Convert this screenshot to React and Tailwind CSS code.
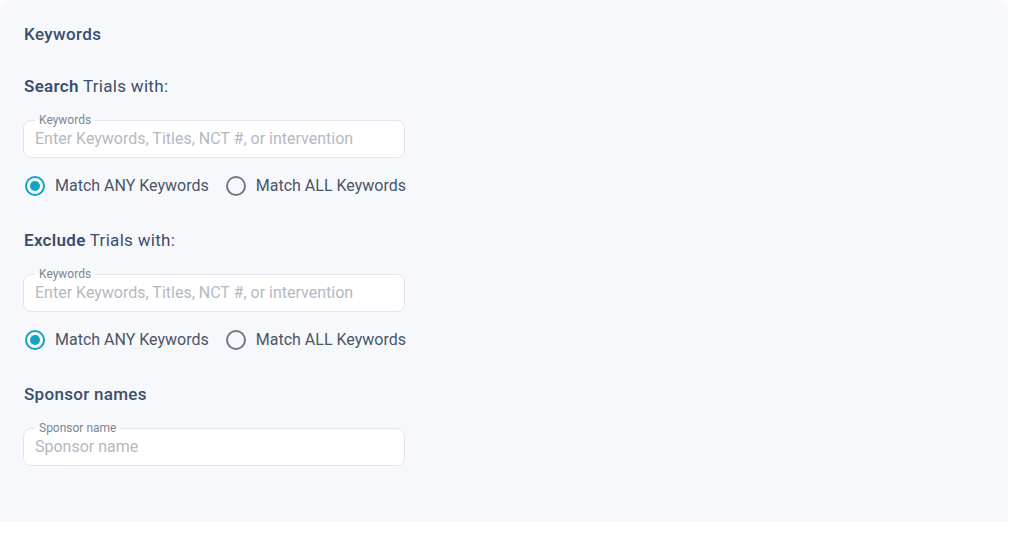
import React, { useState } from 'react';

const OutlinedField = ({ label, placeholder }) => (
  <fieldset className="w-[382px] rounded-lg border border-[#e1e4ea] bg-white px-[11px] pb-[8px] pt-[3px]">
    <legend className="px-[4px] text-[12px] leading-[12px] text-[#7b8594]">{label}</legend>
    <input
      type="text"
      placeholder={placeholder}
      className="block h-[20px] w-full bg-transparent text-[16px] leading-[20px] text-[#3e4d64] outline-none placeholder:text-[#b3b9c3]"
    />
  </fieldset>
);

const Radio = ({ checked, label, onClick }) => (
  <button type="button" onClick={onClick} className="flex items-center gap-[10px]">
    <span
      className={
        checked
          ? 'flex h-[20px] w-[20px] items-center justify-center rounded-full border-2 border-[#14a2c2]'
          : 'flex h-[20px] w-[20px] items-center justify-center rounded-full border-2 border-[#6f7a89]'
      }
    >
      {checked && <span className="h-[10px] w-[10px] rounded-full bg-[#14a2c2]" />}
    </span>
    <span className="text-[16px] leading-[20px] text-[#4a5567]">{label}</span>
  </button>
);

const MatchGroup = () => {
  const [mode, setMode] = useState('any');
  return (
    <div className="mt-[18px] flex items-center gap-[17px] pl-[1px]">
      <Radio checked={mode === 'any'} label="Match ANY Keywords" onClick={() => setMode('any')} />
      <Radio checked={mode === 'all'} label="Match ALL Keywords" onClick={() => setMode('all')} />
    </div>
  );
};

export default function App() {
  return (
    <div className="min-h-screen bg-white font-['Roboto',sans-serif]">
      <div className="w-[1008px] rounded-t-[10px] bg-[#f7f8fc] px-6 pb-[56px] pt-6">
        <h2 className="text-[17px] font-medium leading-[21px] tracking-[0.4px] text-[#3b4e6b]">Keywords</h2>

        <p className="mt-[31px] text-[17px] leading-[21px] tracking-[0.3px] text-[#3b4e6b]">
          <span className="font-semibold">Search</span> Trials with:
        </p>
        <div className="mt-[17px] -ml-px">
          <OutlinedField label="Keywords" placeholder="Enter Keywords, Titles, NCT #, or intervention" />
        </div>
        <MatchGroup />

        <p className="mt-[34px] text-[17px] leading-[21px] tracking-[0.3px] text-[#3b4e6b]">
          <span className="font-semibold">Exclude</span> Trials with:
        </p>
        <div className="mt-[17px] -ml-px">
          <OutlinedField label="Keywords" placeholder="Enter Keywords, Titles, NCT #, or intervention" />
        </div>
        <MatchGroup />

        <h3 className="mt-[34px] text-[17px] font-medium leading-[21px] tracking-[0.3px] text-[#3b4e6b]">Sponsor names</h3>
        <div className="mt-[17px] -ml-px">
          <OutlinedField label="Sponsor name" placeholder="Sponsor name" />
        </div>
      </div>
    </div>
  );
}
